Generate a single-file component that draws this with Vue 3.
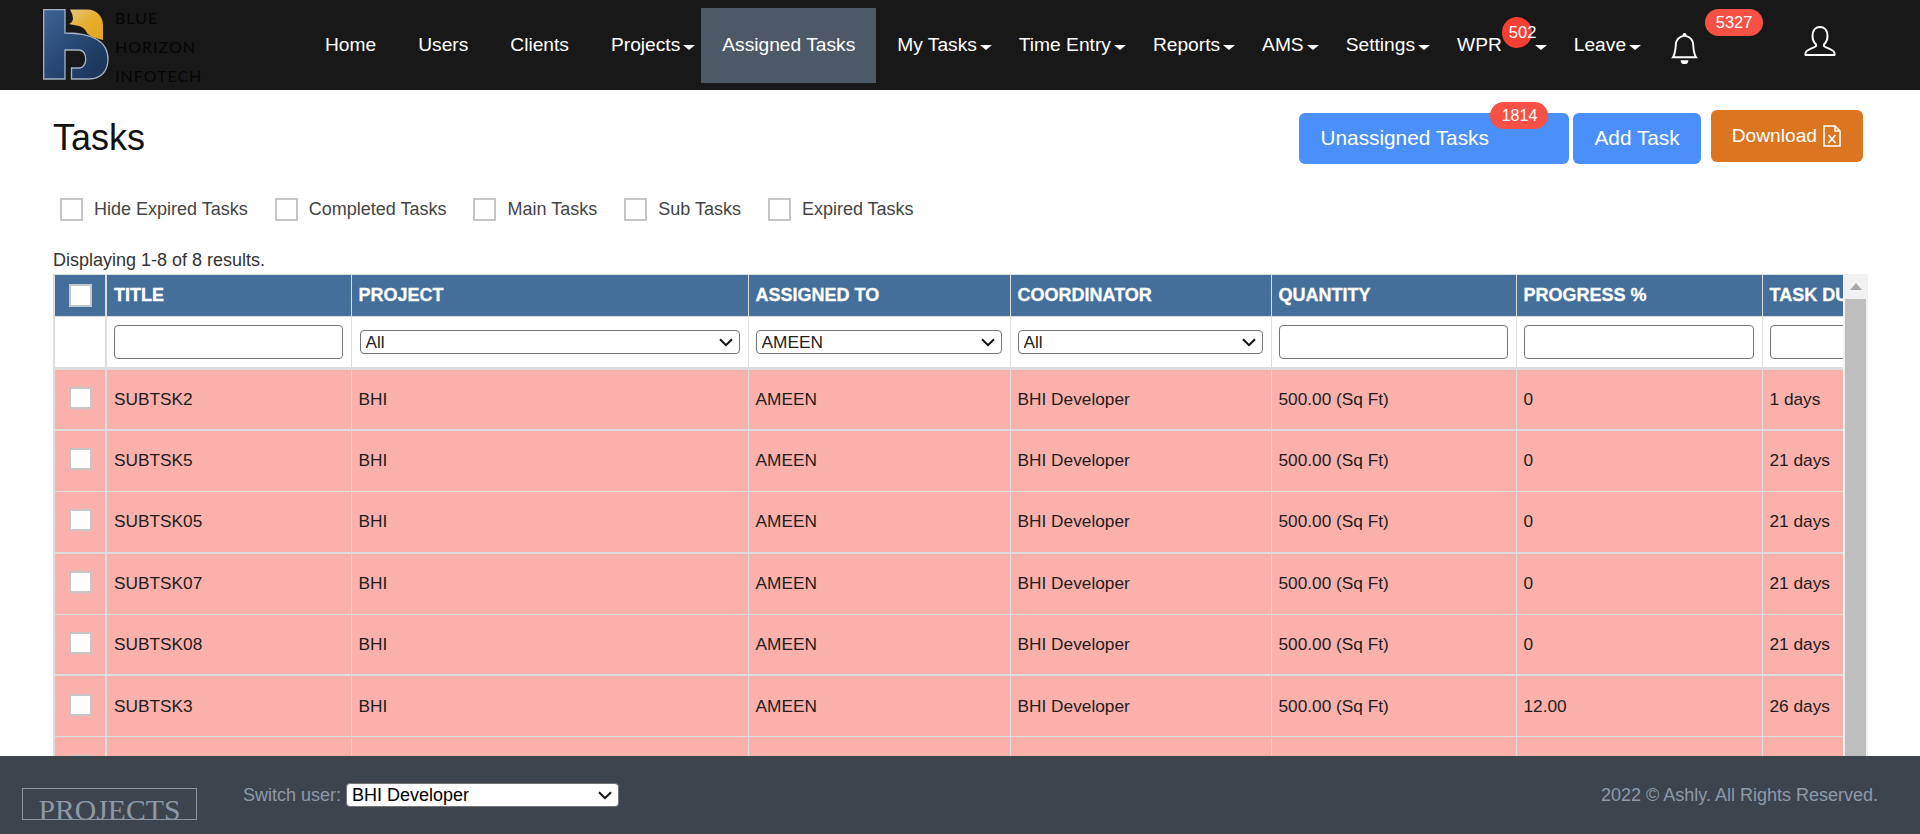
<script setup>
// nav entries, in order
const navItems = [
  { label: 'Home' },
  { label: 'Users' },
  { label: 'Clients' },
  { label: 'Projects', caret: true },
  { label: 'Assigned Tasks', active: true },
  { label: 'My Tasks', caret: true },
  { label: 'Time Entry', caret: true },
  { label: 'Reports', caret: true },
  { label: 'AMS', caret: true },
  { label: 'Settings', caret: true },
  { label: 'WPR', caret: true, badge: '502' },
  { label: 'Leave', caret: true }
]

const filters = ['Hide Expired Tasks', 'Completed Tasks', 'Main Tasks', 'Sub Tasks', 'Expired Tasks']

const columns = ['Title', 'Project', 'Assigned To', 'Coordinator', 'Quantity', 'Progress %', 'Task Duration']

const rows = [
  { title: 'SUBTSK2', progress: '0', duration: '1 days' },
  { title: 'SUBTSK5', progress: '0', duration: '21 days' },
  { title: 'SUBTSK05', progress: '0', duration: '21 days' },
  { title: 'SUBTSK07', progress: '0', duration: '21 days' },
  { title: 'SUBTSK08', progress: '0', duration: '21 days' },
  { title: 'SUBTSK3', progress: '12.00', duration: '26 days' },
  { title: 'SUBTSK4', progress: '0', duration: '26 days' },
  { title: 'SUBTSK6', progress: '0', duration: '26 days' }
]
</script>

<template>
  <div class="page">
    <header class="topbar">
      <div class="brand">
        <svg class="logo" viewBox="0 0 66 71" width="66" height="71">
          <defs>
            <linearGradient id="blueFill" x1="0" y1="0" x2="1" y2="1">
              <stop offset="0" stop-color="#3d6396" />
              <stop offset="0.6" stop-color="#24426c" />
              <stop offset="1" stop-color="#1b3252" />
            </linearGradient>
            <linearGradient id="goldFill" x1="0" y1="0" x2="1" y2="1">
              <stop offset="0" stop-color="#e4c57f" />
              <stop offset="0.5" stop-color="#e6ae2c" />
              <stop offset="1" stop-color="#e2a520" />
            </linearGradient>
          </defs>
          <path d="M0.7 0.7H22V24C45 24 65 30 65 50C65 62 58 70 46 70H28.5V59H36C45 59 45 41 36 41H22V70H0.7Z" fill="url(#blueFill)" stroke="#a4b3c6" stroke-width="1.3" />
          <path d="M27 0.5H44C54 0.5 60 8 60 16V31C52 29 46 27 44 24C42 20 40 18 36 17L26 15C30 13 32 10 27 0.5Z" fill="url(#goldFill)" />
        </svg>
        <div class="brand-name">
          <span>BLUE</span>
          <span>HORIZON</span>
          <span>INFOTECH</span>
        </div>
      </div>

      <nav class="nav">
        <a
          v-for="item in navItems"
          :key="item.label"
          class="nav-item"
          :class="{ active: item.active, dropdown: item.caret }"
        >
          {{ item.label }}
          <span v-if="item.badge" class="nav-badge">{{ item.badge }}</span>
          <i v-if="item.caret" class="caret"></i>
        </a>
      </nav>

      <div class="bell">
        <svg viewBox="0 0 16 16" width="31" height="31" fill="#fff">
          <path d="M8 16a2 2 0 0 0 2-2H6a2 2 0 0 0 2 2zM8 1.918l-.797.161A4.002 4.002 0 0 0 4 6c0 .628-.134 2.197-.459 3.742-.16.767-.376 1.566-.663 2.258h10.244c-.287-.692-.502-1.49-.663-2.258C12.134 8.197 12 6.628 12 6a4.002 4.002 0 0 0-3.203-3.92L8 1.917zM14.22 12c.223.447.481.801.78 1H1c.299-.199.557-.553.78-1C2.68 10.2 3 6.88 3 6c0-2.42 1.72-4.44 4.005-4.901a1 1 0 1 1 1.99 0A5.002 5.002 0 0 1 13 6c0 .88.32 4.2 1.22 6z" />
        </svg>
        <span class="bell-badge">5327</span>
      </div>

      <svg class="user" viewBox="0 0 32 30" width="32" height="30" fill="none" stroke="#fff" stroke-width="2" stroke-linejoin="round">
        <path d="M16 1C11 1 8.5 5 8.5 10C8.5 14 10.5 17 12 18.5V20C12 21.5 2 23 1.5 27V29H30.5V27C30 23 20 21.5 20 20V18.5C21.5 17 23.5 14 23.5 10C23.5 5 21 1 16 1Z" />
      </svg>
    </header>

    <main class="content">
      <div class="title-row">
        <h1>Tasks</h1>
        <div class="actions">
          <button class="btn btn-blue btn-unassigned">
            Unassigned Tasks
            <span class="btn-badge">1814</span>
          </button>
          <button class="btn btn-blue">Add Task</button>
          <button class="btn btn-orange">
            Download
            <svg viewBox="0 0 18 22" width="18" height="22" fill="none" stroke="#fff" stroke-width="1.6">
              <path d="M1 1H12L17 6V21H1Z" />
              <path d="M12 1V6H17" />
              <path d="M5.5 10L12.5 18M12.5 10L5.5 18" />
            </svg>
          </button>
        </div>
      </div>

      <div class="filter-row">
        <label v-for="name in filters" :key="name" class="check-label">
          <input type="checkbox" class="check" />
          {{ name }}
        </label>
      </div>

      <p class="summary">Displaying 1-8 of 8 results.</p>

      <div class="grid-pane">
        <div class="grid-clip">
          <table class="grid">
            <colgroup>
              <col class="c-check" />
              <col class="c-title" />
              <col class="c-project" />
              <col class="c-assigned" />
              <col class="c-coord" />
              <col class="c-qty" />
              <col class="c-num" />
              <col class="c-num" />
            </colgroup>
            <thead>
              <tr class="head-row">
                <th class="check-cell"><input type="checkbox" class="check" /></th>
                <th v-for="col in columns" :key="col">{{ col }}</th>
              </tr>
              <tr class="search-row">
                <td class="check-cell"></td>
                <td><input type="text" class="search" /></td>
                <td>
                  <select class="pick"><option>All</option></select>
                </td>
                <td>
                  <select class="pick"><option>AMEEN</option></select>
                </td>
                <td>
                  <select class="pick"><option>All</option></select>
                </td>
                <td><input type="text" class="search" /></td>
                <td><input type="text" class="search" /></td>
                <td><input type="text" class="search" /></td>
              </tr>
            </thead>
            <tbody>
              <tr v-for="row in rows" :key="row.title" class="data-row">
                <td class="check-cell"><input type="checkbox" class="check" /></td>
                <td>{{ row.title }}</td>
                <td>BHI</td>
                <td>AMEEN</td>
                <td>BHI Developer</td>
                <td>500.00 (Sq Ft)</td>
                <td>{{ row.progress }}</td>
                <td>{{ row.duration }}</td>
              </tr>
            </tbody>
          </table>
        </div>
        <div class="scrollbar">
          <div class="scroll-btn"><i></i></div>
          <div class="scroll-thumb"></div>
        </div>
      </div>
    </main>

    <footer class="footer">
      <div class="footer-logo">PROJECTS</div>
      <label class="switch-user">
        Switch user:
        <select class="switch-select"><option>BHI Developer</option></select>
      </label>
      <div class="copyright">2022 © Ashly. All Rights Reserved.</div>
    </footer>
  </div>
</template>

<style>
html,
body {
  margin: 0;
  overflow: hidden;
}
</style>

<style scoped>
.page {
  height: 100vh;
  display: flex;
  flex-direction: column;
  font-family: "Liberation Sans", Arial, sans-serif;
  color: #222;
  background: #fff;
}

/* top bar */
.topbar {
  flex: none;
  height: 90px;
  display: flex;
  align-items: center;
  padding-left: 43px;
  background: #181818;
  box-sizing: border-box;
}

.brand {
  width: 261px;
  height: 90px;
  flex: none;
  display: flex;
  gap: 6px;
}

.logo {
  margin-top: 9px;
}

.brand-name {
  display: flex;
  flex-direction: column;
  margin-top: 3px;
  font-family: Lato, sans-serif;
  font-size: 16px;
  line-height: 29px;
  letter-spacing: 1px;
  color: #050505;
}

.nav {
  display: flex;
  align-items: center;
  height: 75px;
}

.nav-item {
  display: flex;
  align-items: center;
  height: 100%;
  padding: 0 21px;
  font-size: 19.2px;
  color: #fff;
  white-space: nowrap;
}

.nav-item.dropdown {
  padding-right: 6px;
}

.nav-item.active {
  background: #4d5966;
}

.caret {
  width: 0;
  height: 0;
  margin: 5px 0 0 3px;
  border-left: 6px solid transparent;
  border-right: 6px solid transparent;
  border-top: 5px solid #fff;
}

.nav-badge {
  position: relative;
  top: -13px;
  box-sizing: border-box;
  width: 30px;
  height: 31px;
  padding-left: 7px;
  border-radius: 50%;
  background: #f43f35;
  font-size: 16.5px;
  line-height: 31px;
  text-align: left;
}

.bell {
  display: flex;
  margin-left: 22px;
  position: relative;
  top: 3px;
}

.bell-badge {
  position: absolute;
  left: 36px;
  top: -24px;
  width: 58px;
  height: 27px;
  border-radius: 14px;
  background: #f75146;
  color: #fff;
  font-size: 16.5px;
  line-height: 27px;
  text-align: center;
}

.user {
  margin-left: 104px;
  position: relative;
  top: -4px;
}

/* main */
.content {
  flex: 1;
  min-height: 0;
  display: flex;
  flex-direction: column;
  padding: 20px 52px 0 53px;
  overflow: hidden;
}

.title-row {
  flex: none;
  height: 54px;
  display: flex;
  justify-content: space-between;
  align-items: flex-start;
}

h1 {
  margin: 5px 0 0;
  font-size: 36px;
  line-height: 46px;
  font-weight: 400;
  color: #111;
}

.actions {
  display: flex;
  margin-right: 5px;
}

.btn {
  position: relative;
  display: flex;
  align-items: center;
  border: none;
  border-radius: 6px;
  padding: 0 21px;
  color: #fff;
  font-family: inherit;
}

.btn-blue {
  height: 51px;
  margin-top: 3px;
  margin-right: 4px;
  padding-bottom: 2px;
  background: #4a8ffa;
  font-size: 20.8px;
}

.btn-unassigned {
  width: 270px;
}

.btn-orange {
  height: 52px;
  margin-left: 6px;
  padding-right: 22px;
  gap: 6px;
  background: #dc751f;
  font-size: 19.2px;
}

.btn-badge {
  position: absolute;
  left: 191px;
  top: -11px;
  width: 58px;
  height: 27px;
  border-radius: 14px;
  background: #f75146;
  font-size: 16px;
  line-height: 27px;
  text-align: center;
}

.filter-row {
  flex: none;
  display: flex;
  margin: 34px 0 0 7px;
  font-size: 18px;
  color: #444;
}

.check-label {
  display: flex;
  align-items: center;
  gap: 11px;
  margin-right: 27px;
}

.check {
  appearance: none;
  box-sizing: border-box;
  width: 23px;
  height: 23px;
  margin: 0;
  background: #fff;
  border: 2px solid #c6c6c6;
  display: block;
}

.summary {
  flex: none;
  margin: 29px 0 3px;
  font-size: 18px;
  line-height: 21px;
  color: #333;
}

/* table */
.grid-pane {
  flex: 1;
  min-height: 0;
  display: flex;
}

.grid-clip {
  flex: 1;
  min-width: 0;
  overflow: hidden;
}

.grid {
  width: 1789px;
  table-layout: fixed;
  border-collapse: collapse;
  font-size: 17.28px;
}

.c-check { width: 52px; }
.c-title { width: 245px; }
.c-project { width: 397px; }
.c-assigned { width: 262px; }
.c-coord { width: 261px; }
.c-qty { width: 245px; }
.c-num { width: 246px; }

.grid th,
.grid td {
  padding: 0 8px 0 7px;
  border: 1px solid #ddd;
  text-align: left;
  white-space: nowrap;
  overflow: hidden;
  box-sizing: border-box;
}

.grid .check-cell {
  padding: 0 0 0 14px;
  border-left: 2px solid #ddd;
  border-right: 2px solid #ddd;
}

.head-row {
  height: 42px;
  background: #446f9b;
}

.head-row th {
  font-size: 18px;
  font-weight: 700;
  text-transform: uppercase;
  color: #fff;
  -webkit-text-stroke: 0.3px #fff;
}

.search-row {
  height: 52px;
  background: #fff;
}

.search-row td {
  border-bottom: 3px solid #ddd;
}

.search {
  display: block;
  box-sizing: border-box;
  width: 100%;
  height: 34px;
  border: 1px solid #767676;
  border-radius: 4px;
  background: #fff;
}

/* select arrow drawn by hand, the native one is too thin here */
.pick,
.switch-select {
  appearance: none;
  display: block;
  box-sizing: border-box;
  height: 24px;
  padding: 0 20px 0 5px;
  font-family: inherit;
  background: #fff url("data:image/svg+xml,%3Csvg xmlns='http://www.w3.org/2000/svg' width='14' height='9' fill='none' stroke='%23111' stroke-width='2'%3E%3Cpath d='M1 1.2l6 6 6-6'/%3E%3C/svg%3E") no-repeat right 6px center;
  border: 1px solid #767676;
  border-radius: 4px;
}

.pick {
  width: 100%;
  font-size: 17.28px;
  color: #222;
}

.search-row td:nth-child(3) .pick {
  width: calc(100% - 1px);
  margin-left: 1px;
}

.data-row {
  height: 61.4px;
  background: #fab1ac;
  color: #241c1c;
}

.data-row:nth-child(odd) td {
  border-bottom: 2px solid #ddd;
}

.data-row .check {
  height: 22px;
  margin-top: -3px;
}

.scrollbar {
  flex: none;
  width: 25px;
  display: flex;
  flex-direction: column;
  background: #f1f1f1;
}

.scroll-btn {
  flex: none;
  height: 25px;
  display: flex;
  justify-content: center;
  align-items: center;
}

.scroll-btn i {
  width: 0;
  height: 0;
  border-left: 6px solid transparent;
  border-right: 6px solid transparent;
  border-bottom: 7px solid #a8a8a8;
}

.scroll-thumb {
  flex: 1;
  margin: 0 2px;
  background: #bebebe;
}

/* footer */
.footer {
  flex: none;
  height: 78px;
  display: flex;
  align-items: flex-start;
  box-sizing: border-box;
  padding: 27px 42px 0 22px;
  background: #3d444e;
  color: #8d99a8;
  font-size: 18px;
}

.footer-logo {
  box-sizing: border-box;
  width: 175px;
  height: 32px;
  margin-top: 5px;
  border: 1px solid #8a94a3;
  overflow: hidden;
  font-family: "Liberation Serif", serif;
  font-size: 29.7px;
  line-height: 42px;
  text-align: center;
  white-space: nowrap;
}

.switch-user {
  display: flex;
  align-items: center;
  gap: 5px;
  margin-left: 46px;
}

.switch-select {
  width: 273px;
  font-size: 18px;
  color: #000;
}

.copyright {
  margin-left: auto;
  line-height: 24px;
}
</style>
